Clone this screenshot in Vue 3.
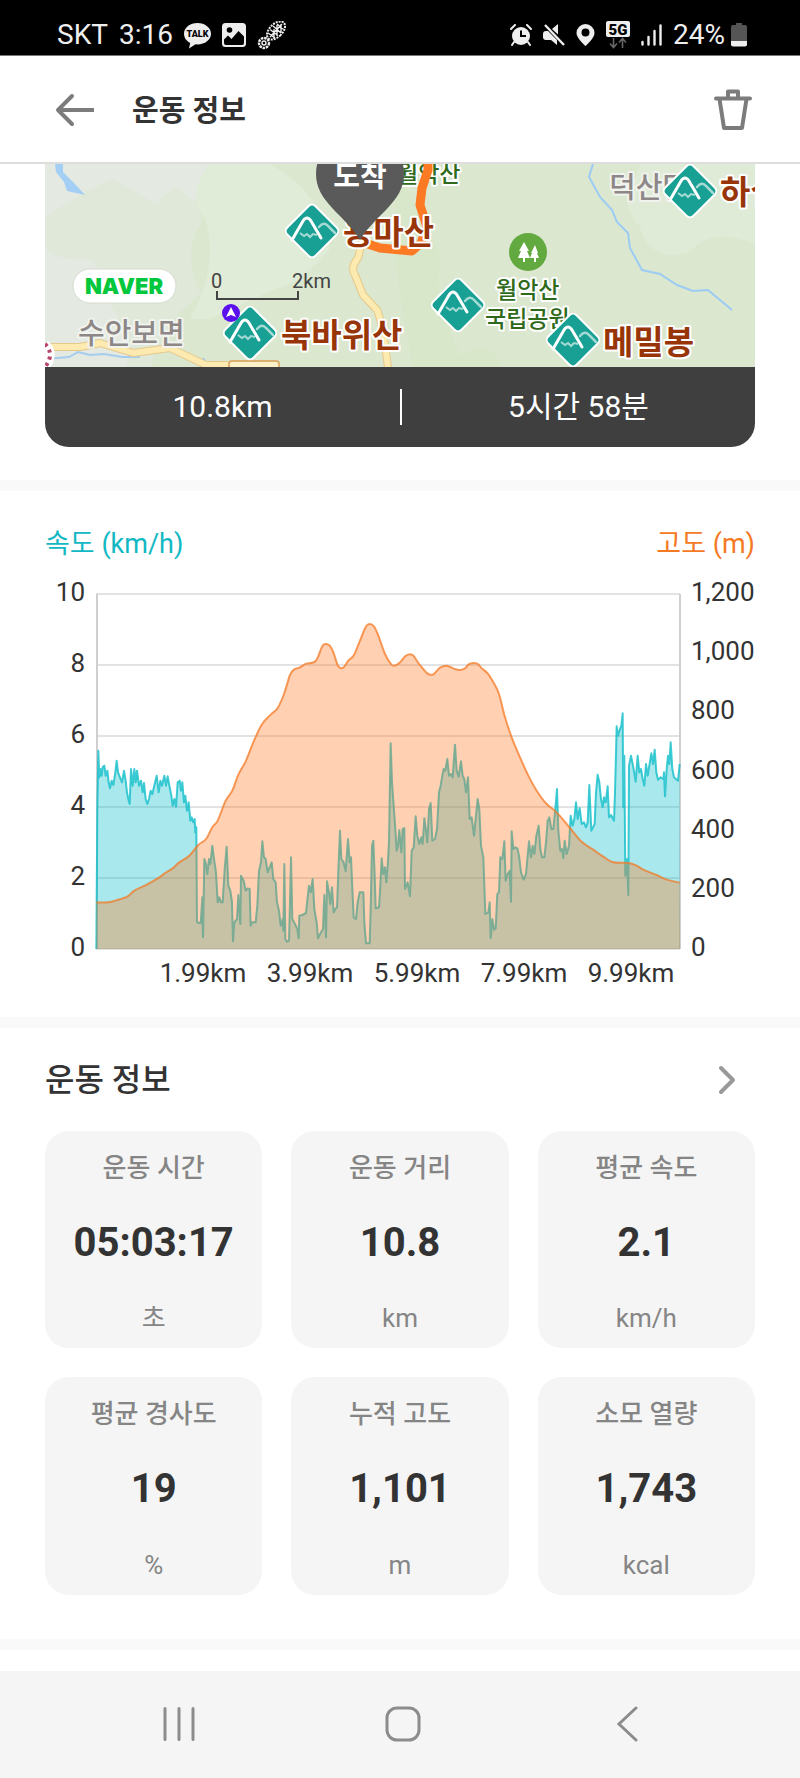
<script setup>
const stats = [
  { label: '운동 시간', value: '05:03:17', unit: '초' },
  { label: '운동 거리', value: '10.8', unit: 'km' },
  { label: '평균 속도', value: '2.1', unit: 'km/h' },
  { label: '평균 경사도', value: '19', unit: '%' },
  { label: '누적 고도', value: '1,101', unit: 'm' },
  { label: '소모 열량', value: '1,743', unit: 'kcal' },
]

const peaks = [
  { x: 267, y: 67 },
  { x: 205, y: 169 },
  { x: 413, y: 141 },
  { x: 528, y: 176 },
  { x: 645, y: 27 },
]

const speedTicks = [10, 8, 6, 4, 2, 0].map((t, i) => ({ text: String(t), y: 25 + i * 71 }))
const altitudeTicks = ['1,200', '1,000', '800', '600', '400', '200', '0'].map((t, i) => ({
  text: t,
  y: 25 + Math.round((i * 355) / 6),
}))
const distanceTicks = ['1.99km', '3.99km', '5.99km', '7.99km', '9.99km'].map((t, i) => ({
  text: t,
  x: 158 + i * 107,
}))

// Track samples, in thirds of a chart unit: the way up, then the way down.
const speedUp = [199,1320,202,900,205,725,208,805,212,780,215,800,218,775,223,770,227,800,232,785,236,820,240,838,245,815,250,828,256,790,260,755,264,790,270,805,276,820,282,785,287,815,291,850,295,870,299,885,303,780,308,830,313,780,317,820,321,785,327,830,333,815,338,850,342,822,347,870,352,885,357,870,362,845,367,855,374,825,380,800,386,850,391,815,396,830,403,800,408,830,413,802,418,830,424,860,428,890,433,870,438,893,443,820,449,815,453,845,457,820,462,880,466,860,471,905,476,880,481,935,485,925,490,940,494,930,496,970,499,955,501,1240,512,1243,517,1165,519,1285,523,1050,528,1065,532,1095,537,1050,541,1065,547,1010,552,1050,558,1090,563,1180,568,1165,573,1180,578,1180,584,1080,590,1013,595,1130,601,1145,606,1180,609,1297,613,1240,621,1230,625,1158,631,1245,633,1100,641,1115,647,1145,653,1138,659,1140,662,1250,667,1240,677,1240,682,1190,687,1085,693,1060,697,997,702,1045,707,1050,713,1090,719,1075,725,1060,730,1110,737,1120,741,1180,747,1205,752,1250,758,1230,760,1265,763,1065,766,1290,771,1298,777,1295,780,1180,783,1045,787,1230,795,1245,802,1260,806,1288,808,1220,817,1218,828,1212,833,1165,837,1130,842,1150,848,1110,853,1200,860,1240,864,1288,870,1275,879,1260,883,1158,888,1285,891,1117,897,1150,901,1185,906,1135,911,1210,916,1200,921,1195,926,1060,930,965,934,1050,941,1060,947,1087,954,990,959,1060,963,1045,968,1160,971,1225,978,1230,983,1180,989,1150,995,1150,1000,1150,1003,1240,1008,1303,1019,1303,1022,1200,1026,1010,1030,995,1034,1100,1037,1198,1047,1195,1051,1130,1055,1048,1060,1095,1065,1075,1069,1120,1073,1070,1077,1000,1082,703,1086,820]
const speedDown = [12,905,16,960,20,1025,24,1010,28,963,34,1030,38,960,43,957,45,1140,53,1120,60,1162,65,1025,71,1015,77,922,82,980,88,1005,94,985,98,1005,103,928,108,965,112,1000,117,900,122,882,127,995,135,990,141,960,147,850,152,830,157,800,161,780,166,785,172,750,177,800,183,795,188,805,195,707,200,785,206,803,213,757,218,800,223,810,228,850,234,805,239,930,245,925,252,980,258,920,263,870,268,900,273,1010,280,1045,286,1215,295,1210,299,1180,302,1287,307,1230,312,1262,317,1258,322,1155,327,1150,331,1045,337,1050,343,997,347,1115,353,1095,359,1085,363,1178,365,967,370,1020,376,1015,382,1018,387,1040,393,1090,401,1112,408,1095,413,1040,417,997,423,1045,428,1010,433,1035,439,980,446,950,451,1020,456,1045,463,1045,468,1000,473,935,478,925,484,960,490,960,496,900,501,840,505,965,511,1025,516,1020,520,1047,524,995,530,1035,537,1010,542,920,548,950,553,930,558,880,563,930,569,897,575,945,582,940,588,955,593,940,598,828,604,965,609,955,614,945,618,850,623,797,628,820,633,870,638,895,642,865,647,880,653,832,657,925,663,918,672,935,675,850,680,652,684,680,690,660,694,650,698,613,700,895,703,740,706,1100,711,1050,715,1158,717,770,723,740,730,775,737,818,743,740,748,790,753,780,758,810,763,830,768,765,773,800,778,770,784,733,789,765,794,722,799,790,804,812,812,805,820,810,822,790,825,862,830,780,834,740,838,765,842,700,847,780,852,805,858,810,864,815,869,765]
const altitudeUp = [199,1180,235,1180,262,1173,293,1162,313,1145,350,1127,388,1105,405,1092,428,1078,448,1060,478,1040,505,1008,528,990,547,955,563,935,587,875,607,845,625,797,647,757,670,700,695,647,722,617,743,597,762,555,780,498,792,482,810,475,828,464,857,456,878,410,895,407,908,425,925,472,940,476,955,455,972,438,990,395,1010,350,1030,350,1045,380,1065,435,1083,465]
const altitudeDown = [12,470,28,462,48,440,68,438,85,462,112,493,130,496,150,476,170,470,190,478,208,483,225,478,238,465,262,464,275,478,293,493,310,520,327,555,345,625,365,685,390,745,415,800,440,845,470,885,500,910,540,957,575,998,610,1022,640,1043,670,1060,715,1062,740,1070,760,1082,800,1098,830,1112,869,1121]

function toPoints(flat, shift) {
  const out = []
  for (let i = 0; i < flat.length; i += 2) {
    out.push([(flat[i] + shift - 45) / 3, (flat[i + 1] - 180) / 3])
  }
  return out
}

const fmt = (p) => p[0].toFixed(2) + ' ' + p[1].toFixed(2)

function straight(points) {
  return 'M' + points.map(fmt).join('L')
}

function smooth(points) {
  let d = 'M' + fmt(points[0])
  for (let i = 0; i < points.length - 1; i++) {
    const a = points[Math.max(i - 1, 0)]
    const b = points[i]
    const c = points[i + 1]
    const e = points[Math.min(i + 2, points.length - 1)]
    const c1 = [b[0] + (c[0] - a[0]) / 6, b[1] + (c[1] - a[1]) / 6]
    const c2 = [c[0] - (e[0] - b[0]) / 6, c[1] - (e[1] - b[1]) / 6]
    d += 'C' + [c1, c2, c].map(fmt).join(' ')
  }
  return d
}

const close = 'L635 380L51.5 380Z'
const speedLine = straight([...toPoints(speedUp, 0), ...toPoints(speedDown, 1080)])
const altitudeLine = smooth([...toPoints(altitudeUp, 0), ...toPoints(altitudeDown, 1080)])
const speedArea = speedLine + close
const altitudeArea = altitudeLine + close
</script>

<template>
  <div class="screen">
    <div class="status">
      <div class="cluster">
        <span>SKT</span>
        <span>3:16</span>
        <svg width="27" height="27" viewBox="0 0 27 27" role="img" aria-label="카카오톡">
          <path d="M13.500 1C6 1 0 5.700 0 11.800c0 4 2.500 7.300 6.200 9.200L5 26.500l6.500-4.200 2 .2c7.500 0 13.500-4.700 13.500-10.700S21 1 13.500 1z" fill="#eee" />
          <text x="13.500" y="15" class="talk">TALK</text>
        </svg>
        <svg width="24" height="24" viewBox="0 0 24 24" aria-hidden="true">
          <path fill-rule="evenodd" d="M3.500 0h17A3.500 3.500 0 0 1 24 3.500v17a3.500 3.500 0 0 1-3.500 3.500h-17A3.500 3.500 0 0 1 0 20.500v-17A3.500 3.500 0 0 1 3.500 0zM2 16.500V20a2 2 0 0 0 2 2h16a2 2 0 0 0 2-2v-6.500L16.500 8l-7 8L6 12.500z" fill="#eee" />
          <circle cx="7.500" cy="7" r="2.800" fill="#000" />
        </svg>
        <svg width="29" height="29" viewBox="0 0 29 29" aria-hidden="true" fill="none" stroke="#eee">
          <ellipse cx="19" cy="9.500" rx="6.500" ry="11" transform="rotate(45 19 9.500)" stroke-width="2" stroke-dasharray="2 1" />
          <path d="M13 16L25 3M11 12l7 5M13 8.500l8 6M16 5l8 7M20 3l6 5M17 18V8M20 15V4M24 12V3" stroke-width="1.400" />
          <circle cx="7" cy="22" r="5" stroke-width="2.400" stroke-dasharray="2.500 .8" />
          <circle cx="7" cy="22" r="2" stroke-width="1.400" />
        </svg>
      </div>
      <div class="cluster">
        <svg width="22" height="22" viewBox="0 0 22 22" aria-hidden="true">
          <circle cx="11" cy="12" r="9" fill="#eee" />
          <path d="M1 5l4-4M21 5l-4-4M4 18l-2 3M18 18l2 3" stroke="#eee" stroke-width="2" stroke-linecap="round" />
          <path d="M11 6.500V12h5" stroke="#000" stroke-width="2" fill="none" />
        </svg>
        <svg width="22" height="22" viewBox="0 0 22 22" aria-hidden="true">
          <path d="M0 10q0-3 3-3h2l9 9v5l-6-5H3q-3 0-3-3zM9 5l6-5v10.500z" fill="#eee" />
          <path d="M2 1l19 20" stroke="#eee" stroke-width="2.400" />
        </svg>
        <svg width="19" height="22" viewBox="0 0 19 22" aria-hidden="true">
          <path fill-rule="evenodd" d="M9.500 0A9 9 0 0 0 .5 9c0 5.500 9 13 9 13s9-7.500 9-13a9 9 0 0 0-9-9zm0 4.500a4 4 0 1 1 0 8 4 4 0 0 1 0-8z" fill="#eee" />
        </svg>
        <svg width="24" height="28" viewBox="0 0 24 28" role="img" aria-label="5G">
          <rect width="24" height="16" rx="2" fill="#eee" />
          <text x="12" y="13.500" class="five-g">5G</text>
          <path d="M7.500 17v9M4 22.500l3.500 4 3.500-4M16.500 27v-9M13 21.500l3.500-4 3.500 4" fill="none" stroke="#666" stroke-width="1.600" />
        </svg>
        <svg width="21" height="22" viewBox="0 0 21 22" aria-hidden="true" stroke="#eee" stroke-width="2.400" stroke-linecap="round">
          <path d="M1.500 18v2.500M7.500 13v7.500M13.500 7v13.500M19.500 1.500v19" />
        </svg>
        <div class="battery">
          <span>24%</span>
          <svg width="16" height="24" viewBox="0 0 16 24" aria-hidden="true">
            <path d="M5 0h6v2h3a2 2 0 0 1 2 2v15H0V4a2 2 0 0 1 2-2h3z" fill="#555" />
            <path d="M0 18h16v3.500q0 2-2 2H2q-2 0-2-2z" fill="#eee" />
          </svg>
        </div>
      </div>
    </div>

    <header class="app-bar">
      <button type="button" class="icon-button" aria-label="뒤로">
        <svg width="40" height="34" viewBox="0 0 40 34" fill="none" stroke="#7c7c7c" stroke-width="4" stroke-linecap="round" stroke-linejoin="round">
          <path d="M17 3L3 17l14 14" />
          <path d="M3 17h36" stroke-linecap="butt" />
        </svg>
      </button>
      <h1>운동 정보</h1>
      <button type="button" class="icon-button" aria-label="삭제">
        <svg width="38" height="42" viewBox="0 0 38 42" fill="none" stroke="#7c7c7c" stroke-width="4" stroke-linecap="round" stroke-linejoin="round">
          <path d="M2 9.500h34M14 9V2.500h10V9" />
          <path d="M5.500 10l4.500 29h18l4.500-29" />
        </svg>
      </button>
    </header>

    <main>
      <section class="map-section">
        <div class="map-card">
          <svg class="map" viewBox="0 0 710 203" preserveAspectRatio="xMidYMid slice" role="img" aria-label="운동 경로 지도">
            <rect width="710" height="203" fill="#dbe7cf" />
            <path d="M0 0h165q-12 22-9 60-20 28 0 70-40 30-50 73H0z" fill="#dfe8d9" />
            <path d="M0 0h180l-8 20q-18 15-22 17l-20-14-20 16-42-24q-32 14-44 24Q5 48 0 55z" fill="#e4e9e1" />
            <path d="M0 83q10 14 40 12 20 4 22 40 25 35 20 68H0z" fill="#e4e9e1" />
            <path d="M165 0h60q55 30 60 85-30 35-55 40l-65 30h-20q30-55 15-100-20-25 5-55z" fill="#e0ebd8" />
            <path d="M350 0v90l8 60 10 53h90q-15-31-42-11-30-60-20-100z" fill="#d8e6ca" />
            <path d="M595 0h115v80q-45-18-65 8-40 12-50-25-18-20-12-40 10-10 12-23z" fill="#e0ebd7" />
            <path d="M10 0h8v8l12 12 10 11-18-4-3-9-8-10z" fill="#a4cff4" />
            <path d="M0 195l12-1 12-1 9-5 12 3 14-1 18 3h18M158 194l5 8" fill="none" stroke="#a4cdef" stroke-width="2" />
            <path d="M548 0l-4 13 11 20 12 13 5 12 11 11 2 15 12 22 18 4 17 11 16 6 15-1 24 20" fill="none" stroke="#9cccf4" stroke-width="2" />
            <g fill="none" stroke-linejoin="round">
              <path d="M317 78l-4 16q-8 10-3 17l8 20 14 15q6 14 11 58M0 183h35l20-4 33 10 37-5 36 17h22" stroke="#e5c98b" stroke-width="8" />
              <path d="M317 78l-4 16q-8 10-3 17l8 20 14 15q6 14 11 58M0 183h35l20-4 33 10 37-5 36 17h22" stroke="#fceab0" stroke-width="6" />
            </g>
            <rect x="184" y="197" width="50" height="20" rx="3" fill="#fcf0c8" stroke="#d9b070" stroke-width="2" />
            <path d="M0 180q10 10 0 23" fill="none" stroke="#fff" stroke-width="9" />
            <path d="M0 180q10 10 0 23" fill="none" stroke="#b8446a" stroke-width="4" stroke-dasharray="3 4" />

            <text x="352" y="18" class="park">월악산</text>
            <path d="M383-6V6l-6 18-2 17 7 22-6 16-9 8-32-3-18-6" fill="none" stroke="#fd7a24" stroke-width="9" stroke-linejoin="round" />
            <text x="33" y="180" class="town">수안보면</text>
            <text x="564" y="34" class="town">덕산면</text>
            <text x="298" y="80" class="peak">용마산</text>
            <text x="236" y="183" class="peak">북바위산</text>
            <text x="558" y="190" class="peak">메밀봉</text>
            <text x="675" y="40" class="peak">하설산</text>
            <text x="451" y="134" class="park">월악산</text>
            <text x="440" y="163" class="park">국립공원</text>

            <circle cx="483" cy="88" r="19" fill="#62aa3f" />
            <path d="M479 78l-5 9h2l-3 7h5v4h2v-4h5l-3-7h2zM490 81l-4 8h1l-2 5h4v4h2v-4h3l-2-5h1z" fill="#fff" />

            <g v-for="p in peaks" :key="p.x" :transform="`translate(${p.x} ${p.y})`">
              <rect x="-20" y="-20" width="40" height="40" rx="5" transform="rotate(45)" fill="#18a094" stroke="#fff" stroke-width="2" />
              <path d="M7-4q5-6 9-1l7 7" fill="none" stroke="#a5dad4" stroke-width="2.500" stroke-linecap="round" />
              <path d="M-12 2l4 3 3-2 3 3 3-3 4 1" fill="none" stroke="#a5dad4" stroke-width="2" />
              <path d="M-20 9L-9-10q4-6 8 0L9 7" fill="none" stroke="#fff" stroke-width="3" stroke-linecap="round" />
            </g>

            <circle cx="186" cy="149" r="9" fill="#5b10ee" />
            <path d="M186 143l5 10-5-2-5 2z" fill="#fff" />
            <path d="M172 127v8h81v-8" fill="none" stroke="#444" stroke-width="2" />
            <text x="166" y="124" class="scale">0</text>
            <text x="247" y="124" class="scale">2km</text>
            <rect x="28" y="105" width="103" height="34" rx="17" fill="#fff" stroke="#d5dbd0" />
            <text x="79" y="130" class="brand">NAVER</text>

            <path d="M271 10a44 44 0 0 1 88 0c0 28-28 40-44 66-16-26-44-38-44-66z" fill="#5a5a5a" />
            <text x="315" y="23" class="arrival">도착</text>
          </svg>
          <div class="summary">
            <span>10.8km</span>
            <span>5시간 58분</span>
          </div>
        </div>
      </section>

      <section class="chart-section">
        <div class="legend">
          <span class="speed">속도 (km/h)</span>
          <span class="altitude">고도 (m)</span>
        </div>
        <svg class="chart" viewBox="0 0 710 425" role="img" aria-label="속도와 고도 그래프">
          <g stroke="#e2e2e2" stroke-width="2">
            <path v-for="t in speedTicks" :key="t.y" :d="`M51 ${t.y}H635`" />
          </g>
          <path d="M52 25v355M635 25v355" stroke="#cfcfcf" stroke-width="2" />
          <path :d="speedArea" fill="#12bec9" fill-opacity=".36" />
          <path :d="speedLine" fill="none" stroke="#12bec9" stroke-opacity=".8" stroke-width="2" stroke-linejoin="round" />
          <path :d="altitudeArea" fill="#ff7822" fill-opacity=".35" />
          <path :d="altitudeLine" fill="none" stroke="#f47a26" stroke-opacity=".75" stroke-width="2" />
          <g class="ticks">
            <text v-for="t in speedTicks" :key="t.text" x="40" :y="t.y + 7" text-anchor="end">{{ t.text }}</text>
            <text v-for="t in altitudeTicks" :key="t.text" x="646" :y="t.y + 7">{{ t.text }}</text>
            <text v-for="t in distanceTicks" :key="t.text" :x="t.x" y="413" text-anchor="middle">{{ t.text }}</text>
          </g>
        </svg>
      </section>

      <section class="stats-section">
        <div class="stats-head">
          <h2>운동 정보</h2>
          <button type="button" class="icon-button" aria-label="자세히">
            <svg width="18" height="30" viewBox="0 0 18 30" fill="none" stroke="#999" stroke-width="4" stroke-linecap="round" stroke-linejoin="round">
              <path d="M3 3l12 12L3 27" />
            </svg>
          </button>
        </div>
        <ul class="cards">
          <li v-for="s in stats" :key="s.label" class="card">
            <span class="label">{{ s.label }}</span>
            <strong>{{ s.value }}</strong>
            <span class="unit">{{ s.unit }}</span>
          </li>
        </ul>
      </section>
    </main>

    <nav class="system-nav" aria-label="시스템">
      <button type="button" class="icon-button" aria-label="최근 앱">
        <svg width="34" height="36" viewBox="0 0 34 36" stroke="#8c8c8c" stroke-width="3" stroke-linecap="round">
          <path d="M3 2.500v31M17 2.500v31M31 2.500v31" />
        </svg>
      </button>
      <button type="button" class="icon-button" aria-label="홈">
        <svg width="36" height="36" viewBox="0 0 36 36" fill="none" stroke="#8c8c8c" stroke-width="3">
          <rect x="2" y="2" width="32" height="32" rx="10" />
        </svg>
      </button>
      <button type="button" class="icon-button" aria-label="이전">
        <svg width="22" height="36" viewBox="0 0 22 36" fill="none" stroke="#8c8c8c" stroke-width="3" stroke-linecap="round">
          <path d="M20 2L3 18l17 16" />
        </svg>
      </button>
    </nav>
  </div>
</template>

<style>
body {
  background: #fff;
}
</style>

<style scoped>
.screen {
  font-family: Roboto, "Noto Sans CJK KR", sans-serif;
  color: #333;
  background: #fff;
}

svg {
  display: block;
  flex: none;
}

.icon-button {
  display: flex;
  align-items: center;
  justify-content: center;
  padding: 0;
  border: 0;
  background: none;
}

.status {
  display: flex;
  justify-content: space-between;
  box-sizing: border-box;
  height: 56px;
  padding: 15px 53px 0 57px;
  background: #000;
  border-bottom: 1px solid #777;
  color: #eee;
  font-size: 28px;
  line-height: 40px;
}

.cluster {
  display: flex;
  align-items: center;
  gap: 11px;
  height: 40px;
}

.battery {
  display: flex;
  align-items: center;
  gap: 6px;
}

.talk {
  font: 900 9px Roboto, sans-serif;
  text-anchor: middle;
}

.five-g {
  font: 900 15px Roboto, sans-serif;
  text-anchor: middle;
}

.app-bar {
  display: flex;
  align-items: center;
  box-sizing: border-box;
  height: 108px;
  padding: 2px 48px 0 55px;
  border-bottom: 2px solid #ddd;
}

.app-bar h1 {
  flex: 1;
  margin: 2px 0 0 37px;
  font-size: 29px;
  line-height: 40px;
  font-weight: 700;
}

.map-section {
  padding: 0 45px 33px;
}

.map-card {
  overflow: hidden;
  border-radius: 0 0 24px 24px;
}

.map {
  width: 100%;
}

.map text {
  font-family: "Noto Sans CJK KR", sans-serif;
  font-weight: 500;
  paint-order: stroke;
  stroke: #fff;
  stroke-width: 4px;
  stroke-linejoin: round;
}

.map .peak {
  font-size: 33px;
  font-weight: 700;
  fill: #983508;
}

.map .town {
  font-size: 29px;
  fill: #8d8787;
  stroke: #f1f3ee;
}

.map .park {
  font-size: 23px;
  fill: #2e6a1a;
}

.map .scale {
  font-family: Roboto, sans-serif;
  font-size: 20px;
  font-weight: 400;
  fill: #444;
  stroke: none;
}

.map .brand {
  font-family: Inter, sans-serif;
  font-size: 22px;
  font-weight: 900;
  fill: #03c73c;
  stroke: none;
  text-anchor: middle;
}

.map .arrival {
  font-size: 29px;
  font-weight: 700;
  fill: #fff;
  stroke: none;
  text-anchor: middle;
}

.summary {
  display: grid;
  grid-template-columns: 1fr 1fr;
  align-items: center;
  height: 80px;
  background: #3f3f3f;
  color: #fff;
  font-size: 30px;
  line-height: 36px;
  text-align: center;
}

.summary span + span {
  border-left: 2px solid #fff;
}

.chart-section {
  padding: 33px 45px 23px;
  border-top: 11px solid #f9f9f9;
}

.legend {
  display: flex;
  justify-content: space-between;
  font-size: 27px;
  line-height: 40px;
}

.speed {
  color: #12b8c3;
}

.altitude {
  color: #f47a26;
}

.chart {
  width: 100%;
  margin-top: 5px;
}

.ticks {
  font-size: 26px;
  fill: #333;
}

.stats-section {
  padding: 32px 45px 44px;
  border-top: 11px solid #f9f9f9;
  border-bottom: 11px solid #f9f9f9;
}

.stats-head {
  display: flex;
  align-items: center;
  justify-content: space-between;
  padding-right: 19px;
}

.stats-head h2 {
  margin: 0;
  font-size: 32px;
  line-height: 40px;
  font-weight: 500;
}

.cards {
  display: grid;
  grid-template-columns: repeat(3, 1fr);
  gap: 29px;
  margin: 31px 0 0;
  padding: 0;
  list-style: none;
}

.card {
  display: flex;
  flex-direction: column;
  align-items: center;
  justify-content: space-between;
  box-sizing: border-box;
  aspect-ratio: 1;
  padding: 17px 0 10px;
  border-radius: 24px;
  background: #f5f5f5;
}

.label,
.unit {
  color: #858585;
  font-size: 26px;
  line-height: 40px;
}

.label {
  font-weight: 500;
}

.card strong {
  font-size: 40px;
  line-height: 60px;
  font-weight: 700;
}

.system-nav {
  display: grid;
  grid-template-columns: repeat(3, 1fr);
  height: 107px;
  margin-top: 21px;
  padding: 0 61px 0 67px;
  box-sizing: border-box;
  background: #f5f5f5;
}
</style>
